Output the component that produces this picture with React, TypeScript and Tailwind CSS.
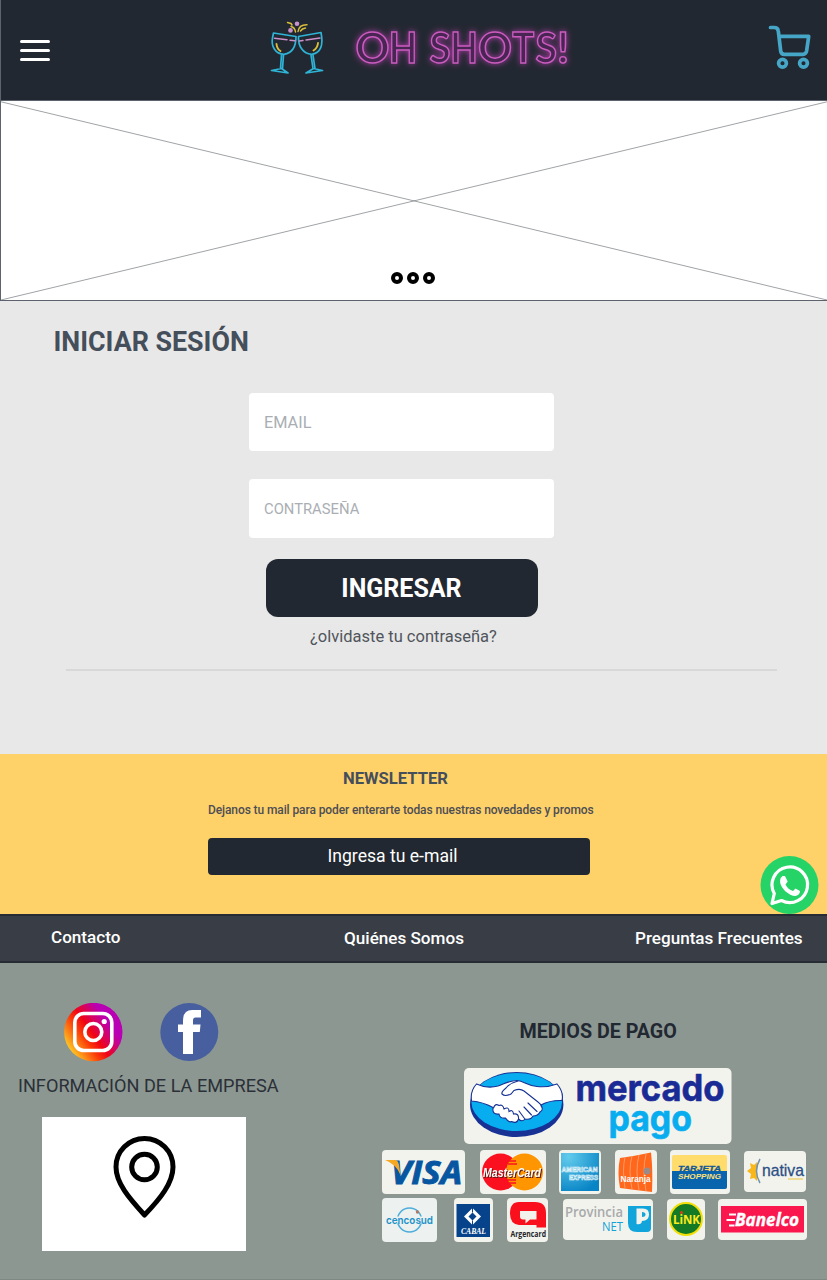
import React from "react";

function Glasses() {
  return (
    <svg className="block h-[60px] w-[60px]" viewBox="267 18 60 60" fill="none" strokeLinecap="round" strokeLinejoin="round">
      <g stroke="#2fb3d6" strokeWidth="1.7">
        <path d="M273.500 33 L296 36.500 C296 46 293 53 284 54.300 C275 54 271 46 272.500 38 Z" />
        <path d="M298.500 36.500 L321 32.500 C323.500 45 321 53 311.500 54.300 C303 54 298 46 298.500 36.500 Z" />
        <path d="M281.500 55 L280.500 68.500 M283.500 55 L282.500 68.500 M271.500 70.500 L281.500 68.500 L288 73 Z" />
        <path d="M311 55 L313 68.500 M313 55 L315 68.500 M306 73 L313.500 68.500 L322.500 70.500 Z" />
      </g>
      <path d="M274.500 38.300 L287 39.700 M290 40.300 L295 40.800 M299.500 41 L303 40.500 M306 40 L320 38" stroke="#cd8fc7" strokeWidth="1.500" />
      <path d="M276.500 44 Q277 49 280.500 51 M318 43 Q317.500 48 313.500 50.500" stroke="#d9bd3b" strokeWidth="1.900" />
      <path d="M287.500 22.500 L291 23.500 L292 25 M291 26.500 Q295 27.500 295.500 32 M298 31.500 Q299 24.500 307 24.700 M300.500 31 Q302 28.500 305.500 28" stroke="#d9bd3b" strokeWidth="1.500" />
      <g fill="#c792cc"><circle cx="297" cy="23.700" r="2.300" /><circle cx="290.500" cy="30.400" r="2.300" /></g>
    </svg>
  );
}

const neonLetters = [
  { ch: "O", x: 355.5, w: 34 },
  { ch: "H", x: 388.7, w: 28.5 },
  { ch: "S", x: 429.5, w: 21 },
  { ch: "H", x: 450.3, w: 27.5 },
  { ch: "O", x: 478, w: 34 },
  { ch: "T", x: 512.3, w: 22 },
  { ch: "S", x: 535.5, w: 21.5 },
  { ch: "!", x: 557, w: 12 },
];

function Neon() {
  return (
    <svg className="ml-[20px] block h-[60px] w-[232px] overflow-visible [filter:drop-shadow(0_0_3px_#a53aa0)]" viewBox="347 20 232 60">
      <g fontFamily="Lato, sans-serif" fontWeight="700" fontSize="42" fill="#482552" stroke="#cb5cc0" strokeWidth="1.500">
        {neonLetters.map((l) => (
          <text key={l.x} x={l.x} y="65" textLength={l.w} lengthAdjust="spacingAndGlyphs">{l.ch}</text>
        ))}
      </g>
    </svg>
  );
}

function Header() {
  return (
    <header className="flex h-[101px] items-start border-b border-l border-[#5c636d] bg-[#222831]">
      <div className="ml-[19px] mt-[39.600px] flex w-[30px] flex-col gap-[5.600px]">
        <span className="h-[3.500px] rounded-full bg-white" />
        <span className="h-[3.500px] rounded-full bg-white" />
        <span className="h-[3.500px] rounded-full bg-white" />
      </div>
      <div className="ml-[217px] mt-[18px] flex"><Glasses /><Neon /></div>
      <svg className="ml-[186px] mt-5 block h-[54px] w-[52px]" viewBox="765 20 52 54" fill="none" stroke="#46a6c7" strokeWidth="3.700" strokeLinecap="round" strokeLinejoin="round">
        <path d="M770.500 27.500 H774 Q778 27.500 778.300 31 L780.700 51 Q781 54.300 784.500 54.300 H803 Q806 54.300 806.600 51 L808.700 36.400 H779.500" />
        <circle cx="782.500" cy="63.300" r="3.900" /><circle cx="803.500" cy="63.300" r="3.900" />
      </svg>
    </header>
  );
}

function Banner() {
  return (
    <section className="relative flex h-[200px] items-end justify-center border-b border-l border-[#5c636d] bg-white pb-4 pr-[2px]">
      <svg className="absolute inset-0 h-full w-full" viewBox="0 0 826 199" preserveAspectRatio="none" stroke="#777b80" strokeWidth="0.700">
        <path d="M0 0.800 L826 199 M0 199 L826 0.800" />
      </svg>
      <div className="relative flex gap-1">
        <span className="h-3 w-3 rounded-full border-4 border-black" />
        <span className="h-3 w-3 rounded-full border-4 border-black" />
        <span className="h-3 w-3 rounded-full border-4 border-black" />
      </div>
    </section>
  );
}

function Login() {
  return (
    <main className="flex h-[453px] flex-col bg-[#e8e8e8]">
      <h1 className="ml-[53.500px] mt-[25px] h-8 text-[26.800px] font-bold leading-8 text-[#454e5b]">INICIAR SESIÓN</h1>
      <form className="ml-[249px] mt-[35px] flex w-[305px] flex-col" onSubmit={(e) => e.preventDefault()}>
        <input aria-label="Email" placeholder="EMAIL" className="h-[58px] rounded bg-white px-[15px] text-[16.300px] text-[#454e5b] placeholder:text-[#aaaeb4]" />
        <input aria-label="Contraseña" type="password" placeholder="CONTRASEÑA" className="mt-[28px] h-[59px] rounded bg-white px-[15px] text-[14.800px] text-[#454e5b] placeholder:text-[#aaaeb4]" />
        <button className="ml-[16.500px] mt-[21px] h-[58px] w-[272px] rounded-xl bg-[#222831] pt-[2px] text-[25px] font-bold text-white">INGRESAR</button>
        <a className="ml-[61px] mt-[8px] h-6 whitespace-nowrap text-[16.500px] leading-6 text-[#50555c]">¿olvidaste tu contraseña?</a>
      </form>
      <hr className="ml-[66px] mt-[20px] w-[711px] border-t-2 border-[#d8d8d9]" />
    </main>
  );
}

function Newsletter() {
  return (
    <section className="flex h-[160px] bg-[#ffd169]">
      <div className="ml-[208px] flex w-[386px] flex-col">
        <h2 className="mt-[15px] h-5 pl-[135px] text-[16.600px] font-bold leading-5 text-[#454e5b]">NEWSLETTER</h2>
        <p className="mt-[13px] h-4 whitespace-nowrap text-[12px] font-medium leading-4 tracking-[-0.100px] text-[#4d4e54]">Dejanos tu mail para poder enterarte todas nuestras novedades y promos</p>
        <button className="mt-[20px] h-[37px] w-[382px] rounded bg-[#222831] pr-[13px] text-[17.600px] text-white">Ingresa tu e-mail</button>
      </div>
      <svg className="ml-[166px] mt-[101px] h-[60px] w-[60px] shrink-0" viewBox="0 0 60 60" fill="none">
        <circle cx="29.500" cy="30" r="29" fill="#25d366" />
        <path d="M12 48.500 L14.300 38.500 A17.800 17.800 0 1 1 21.500 45.500 Z" stroke="white" strokeWidth="3.200" strokeLinejoin="round" />
        <path d="M22.500 21 L25 21 L27.700 26.500 L25.500 29.500 Q28 34.500 33 36 L35.500 33.500 L40 36 Q40 40 35.500 41 C29 41 20 33 20 26 Q20 22.500 22.500 21Z" fill="white" />
      </svg>
    </section>
  );
}

function NavBar() {
  return (
    <nav className="flex h-[49px] border-y-2 border-[#262b34] bg-[#393e46] text-[17.100px] font-medium leading-6 text-white">
      <a className="ml-[51px] mt-[9px] w-[293px]">Contacto</a>
      <a className="mt-[10px] w-[291px]">Quiénes Somos</a>
      <a className="mt-[10px] whitespace-nowrap">Preguntas Frecuentes</a>
    </nav>
  );
}

function Social() {
  return (
    <div className="flex w-[379px] flex-col">
      <div className="ml-[64px] mt-[40px] flex gap-[37px]">
        <svg className="h-[59px] w-[59px]" viewBox="0 0 59 59">
          <defs><linearGradient id="ig" x1="0" y1="0.850" x2="1" y2="0.150">
            <stop offset="0.080" stopColor="#ffcb24" /><stop offset="0.350" stopColor="#fb3a08" /><stop offset="0.480" stopColor="#f00515" /><stop offset="0.750" stopColor="#b900b4" />
          </linearGradient></defs>
          <circle cx="29.300" cy="29" r="29.200" fill="url(#ig)" />
          <g fill="none" stroke="white" strokeWidth="3.600"><rect x="10.800" y="10.500" width="37" height="37" rx="9" /><circle cx="29.300" cy="29" r="8.500" /></g>
          <circle cx="40.200" cy="18.500" r="2.600" fill="white" />
        </svg>
        <svg className="h-[59px] w-[59px]" viewBox="0 0 59 59">
          <circle cx="29.300" cy="29" r="29" fill="#475f9e" />
          <path d="M23 51 V29 H18 V21.500 H23 V18 Q23 7 32 7 H41 V14.500 H35.500 Q33 14.500 33 17.500 V21.500 H40.500 L39.800 29 H33 V51 Z" fill="white" />
        </svg>
      </div>
      <p className="ml-[18px] mt-[12px] h-6 whitespace-nowrap text-[18.150px] leading-6 text-[#2b3038]">INFORMACIÓN DE LA EMPRESA</p>
      <div className="ml-[42px] mt-[19px] flex h-[134px] w-[204px] justify-center bg-white">
        <svg className="mt-[19px] h-[83px] w-[63px]" viewBox="0 0 63 83" fill="none" stroke="black" strokeWidth="5">
          <path d="M31.500 79 C16 62 3 47 3 31 A28.500 28.500 0 0 1 60 31 C60 47 47 63 31.500 79Z" strokeLinejoin="round" />
          <circle cx="31.500" cy="31" r="12.800" />
        </svg>
      </div>
    </div>
  );
}

function MercadoPago() {
  return (
    <svg className="ml-[84.500px] mt-[24px] block h-[76px] w-[268px] overflow-visible" viewBox="0 0 268 76">
      <rect width="267.500" height="76" rx="5" fill="#f2f3ec" />
      <ellipse cx="52.700" cy="36.500" rx="46.700" ry="32.500" fill="#173194" />
      <ellipse cx="52.700" cy="34" rx="45.300" ry="29" fill="#08adf0" />
      <path d="M12.500 16 Q23 21 34 18 C42 15 46 12.500 53 12.500 C60 13 64 18 73 18.500 Q84 19.500 93 16 Q100 24 98 32.500 Q86 32 77 37 Q80 42 76 44 Q74 48 69 48 Q67 52 61 51 Q58 54.500 54.500 51 Q53 56 47.500 53.500 Q45 55 41.500 50 Q36 51 35 46 Q28 47 29 39.500 Q19 34 7.500 33 Q6 23 12.500 16Z" fill="white" stroke="#173194" strokeWidth="1.100" />
      <path d="M54 13 Q46 15 42 20 Q37 24 38 26 Q41 29 47 26 L50 22.500 Q56 20 60 23 L74 34 Q77 36 77.500 39 M64 35 L73 43.500 M60 39 L67.500 47 M55 43 L60.500 50.500 M29.500 40 Q31 35 35 37.500 Q39 36 40 41 Q45 38 45 43.500 Q49 41 49.500 46 Q55 45 54.500 51" fill="none" stroke="#173194" strokeWidth="1.100" strokeLinecap="round" />
      <g fontFamily="Inter, sans-serif" fontWeight="700" strokeLinejoin="round" strokeWidth="0.600">
        <text x="111.500" y="32.500" fontSize="37" fill="#1a2b96" stroke="#1a2b96" textLength="149" lengthAdjust="spacingAndGlyphs">mercado</text>
        <text x="144.500" y="62.500" fontSize="36" fill="#08adf0" stroke="#08adf0" textLength="83.500" lengthAdjust="spacingAndGlyphs">pago</text>
      </g>
    </svg>
  );
}

function Payments() {
  return (
    <div className="flex flex-col">
      <h2 className="ml-[140.500px] mt-[57px] h-6 whitespace-nowrap text-[19.700px] font-bold leading-6 text-[#222831]">MEDIOS DE PAGO</h2>
      <MercadoPago />
      <div className="ml-[3px] mt-[6px] flex items-start">
        <svg className="h-11 w-[83px] overflow-visible" viewBox="0 0 83 44">
          <rect width="83" height="44" rx="4" fill="#f2f3ec" />
          <text x="9" y="34" fontSize="33" fontWeight="700" fontStyle="italic" fontFamily="Open Sans, sans-serif" fill="#0756a1" stroke="#0756a1" strokeWidth="1" textLength="71" lengthAdjust="spacingAndGlyphs">VISA</text>
          <path d="M3 10 H13 Q16 10 17 15 L18.500 25 Q14 14 3 10Z" fill="#f7a823" />
        </svg>
        <svg className="ml-[15px] h-11 w-[66px] overflow-visible" viewBox="0 0 66 44">
          <rect width="66" height="44" rx="4" fill="#f2f3ec" />
          <circle cx="20.500" cy="22" r="18.500" fill="#fb1020" /><circle cx="44.500" cy="22" r="18.500" fill="#ff9500" />
          <path d="M29 11h7 M28 14h9 M27 30h9 M28 33h8" stroke="#fb1020" strokeWidth="1.500" />
          <text className="[filter:drop-shadow(1px_1px_0_#5c1b13)]" x="3" y="26.500" fontFamily="Liberation Sans, sans-serif" fontSize="12.500" fontWeight="700" fontStyle="italic" fill="white" textLength="58" lengthAdjust="spacingAndGlyphs">MasterCard</text>
        </svg>
        <svg className="ml-[13px] h-11 w-[42px]" viewBox="0 0 42 44">
          <defs><radialGradient id="amex" cx="0.200" cy="0.100" r="1"><stop stopColor="#62cbec" /><stop offset="1" stopColor="#0784c5" /></radialGradient></defs>
          <rect width="42" height="44" rx="4" fill="#f2f3ec" /><rect x="2" y="3" width="38" height="38" fill="url(#amex)" />
          <g fontFamily="Liberation Sans, sans-serif" fill="#1d8fc8" stroke="#e5f6fc" strokeWidth="0.600" fontWeight="700" fontSize="6.500">
            <text x="2.500" y="21.500" textLength="36" lengthAdjust="spacingAndGlyphs">AMERICAN</text><text x="10" y="29.500" textLength="29" lengthAdjust="spacingAndGlyphs">EXPRESS</text>
          </g>
        </svg>
        <svg className="ml-[14px] h-11 w-[42px]" viewBox="0 0 42 44">
          <rect width="42" height="44" rx="4" fill="#f2f3ec" />
          <path d="M5 8 Q20 6 36 2.500 Q38 20 37 42 Q20 40 5 38 Q2 22 5 8Z" fill="#ff671c" />
          <path d="M10 7 Q7 20 10 38 M17 6 Q13 20 17 39 M24 5 Q20 20 24 40 M31 4 Q27 20 31 41" fill="none" stroke="#ff9a63" />
          <circle cx="32" cy="21" r="3.500" fill="#998c88" />
          <text x="5.500" y="32" fontFamily="Liberation Sans, sans-serif" fontSize="8.500" fontWeight="700" fill="white" textLength="30" lengthAdjust="spacingAndGlyphs">Naranja</text>
        </svg>
        <svg className="ml-[13px] h-11 w-[60px]" viewBox="0 0 60 44">
          <rect width="60" height="44" rx="4" fill="#f2f3ec" /><rect x="2" y="5" width="55" height="34" rx="2" fill="#ffdc6c" /><path d="M2 21H57V37Q57 39 55 39H4Q2 39 2 37Z" fill="#0964ae" />
          <g fontFamily="Liberation Sans, sans-serif" fontSize="7.500" fontWeight="700" fontStyle="italic"><text x="8" y="21" fill="#145797" stroke="#145797" strokeWidth="0.300" textLength="43" lengthAdjust="spacingAndGlyphs">TARJETA</text><text x="8" y="28.500" fill="#ffe178" textLength="43" lengthAdjust="spacingAndGlyphs">SHOPPING</text></g>
        </svg>
        <svg className="ml-[14px] mt-[1px] h-[41px] w-[62px]" viewBox="0 0 62 41">
          <rect width="62" height="41" rx="4" fill="#f2f3ec" />
          <path d="M13 11L10 14L6 12L7 17L3 20L7 23L6 28L10 27L13 30Z" fill="#f9b71b" /><path d="M16 8Q9 20 16 32" fill="none" stroke="#7292ae" strokeWidth="1.500" />
          <text x="18" y="25" fontFamily="Liberation Sans, sans-serif" fontSize="17" fill="#2b4f86" stroke="#2b4f86" strokeWidth="0.300" textLength="42" lengthAdjust="spacingAndGlyphs">nativa</text><path d="M44 28H59" stroke="#edcc55" strokeWidth="1.200" />
        </svg>
      </div>
      <div className="ml-[3px] mt-[4px] flex items-start">
        <svg className="h-[44px] w-[55px]" viewBox="0 0 55 44">
          <rect width="55" height="44" rx="4" fill="#edf1ef" /><circle cx="27.500" cy="22" r="12" fill="none" stroke="#4daedb" strokeWidth="1.600" /><path d="M12 22H44" stroke="#edf1ef" strokeWidth="7" />
          <text x="4" y="25.500" fontFamily="Inter, sans-serif" fontWeight="600" fontSize="11" fill="#1b92c9" textLength="47" lengthAdjust="spacingAndGlyphs">cencosud</text><circle cx="35.500" cy="14" r="1.700" fill="#b27863" />
        </svg>
        <svg className="ml-[17px] h-[44px] w-[39px]" viewBox="0 0 39 44">
          <rect width="39" height="44" rx="4" fill="#f2f3ec" /><rect x="2.500" y="6" width="33.500" height="33" fill="#07438a" /><path d="M18.500 10L27 18.500L18.500 27L10 18.500Z" fill="white" /><path d="M18.500 14.500L22.500 18.500L18.500 22.500L14.500 18.500Z" fill="#07438a" /><path d="M18.500 10V14.500M18.500 22.500V27" stroke="#07438a" />
          <text x="7" y="35.500" fontFamily="Liberation Serif, serif" fontSize="7.500" fontWeight="700" fontStyle="italic" fill="white" textLength="25" lengthAdjust="spacingAndGlyphs">CABAL</text>
        </svg>
        <svg className="ml-[14px] h-[44px] w-[41px] overflow-visible" viewBox="0 0 41 44">
          <rect width="41" height="44" rx="4" fill="#f2f3ec" />
          <path d="M12 4H28Q39 4 39 15V29.500H29.500V27H12Q3 26 3 15.500Q3 4 12 4Z" fill="#fa101c" />
          <path d="M13 13H29.500V21.500H23L18.500 25.500V21.500H16Q13 21.500 13 18.500Z" fill="#f2f3ec" />
          <text x="3.500" y="38.500" fontFamily="Open Sans, sans-serif" fontSize="8" fontWeight="700" fill="#24242a" textLength="35.500" lengthAdjust="spacingAndGlyphs">Argencard</text>
        </svg>
        <svg className="ml-[15px] mt-[1px] h-[41px] w-[90px] overflow-visible" viewBox="0 0 90 41">
          <rect width="90" height="41" rx="4" fill="#f2f3ec" /><g fontFamily="Open Sans, sans-serif"><text x="2" y="18" fontSize="14.500" fontWeight="600" fill="#a8aaac" textLength="58" lengthAdjust="spacingAndGlyphs">Provincia</text><text x="39" y="32" fontSize="13" fill="#13a2da" textLength="21" lengthAdjust="spacingAndGlyphs">NET</text></g>
          <path d="M65 7H75V27Q76 29 79 29H84V33H74Q65 33 65 24Z" fill="#11a5dc" /><path d="M71 7H88V29Q88 33 84 33H75V29Q71 29 71 24Z" fill="#11a5dc" /><path d="M73.500 9.500V25Q78.500 26 79 22Q86 22 86 15.500Q86 9.500 80 9.500Z" fill="#f2f3ec" /><path d="M79 13V18Q82.500 18 82.500 15.500Q82.500 13 79 13" fill="#11a5dc" />
        </svg>
        <svg className="ml-[14px] mt-[1px] h-[41px] w-[38px]" viewBox="0 0 38 41">
          <rect width="38" height="41" rx="4" fill="#f2f3ec" /><circle cx="19" cy="20" r="16" fill="#147a25" stroke="#f3df08" strokeWidth="2" /><text x="6" y="25" fontFamily="Open Sans, sans-serif" fontSize="13" fontWeight="700" fill="#ffea20" textLength="27" lengthAdjust="spacingAndGlyphs">LiNK</text><circle cx="14.500" cy="13.500" r="1.500" fill="#e33b17" />
        </svg>
        <svg className="ml-[13px] mt-[1px] h-[41px] w-[89px]" viewBox="0 0 89 41">
          <rect width="89" height="41" rx="4" fill="#f2f3ec" /><rect x="3" y="7" width="83" height="26.500" fill="#fa174d" /><text x="17" y="27" fontFamily="Open Sans, sans-serif" fontSize="18" fontWeight="700" fontStyle="italic" fill="white" stroke="white" strokeWidth="0.400" textLength="64" lengthAdjust="spacingAndGlyphs">Banelco</text><path d="M11 15.500H18M8.500 21H17M11 26.500H16.500" stroke="white" strokeWidth="2.200" />
        </svg>
      </div>
    </div>
  );
}

export default function App() {
  return (
    <div className="h-[1280px] w-[827px] overflow-hidden bg-[#8c9791] font-['Roboto',sans-serif]">
      <Header />
      <Banner />
      <Login />
      <Newsletter />
      <NavBar />
      <footer className="flex h-[317px] border-b border-[#7f8984] bg-[#8c9791]"><Social /><Payments /></footer>
    </div>
  );
}
